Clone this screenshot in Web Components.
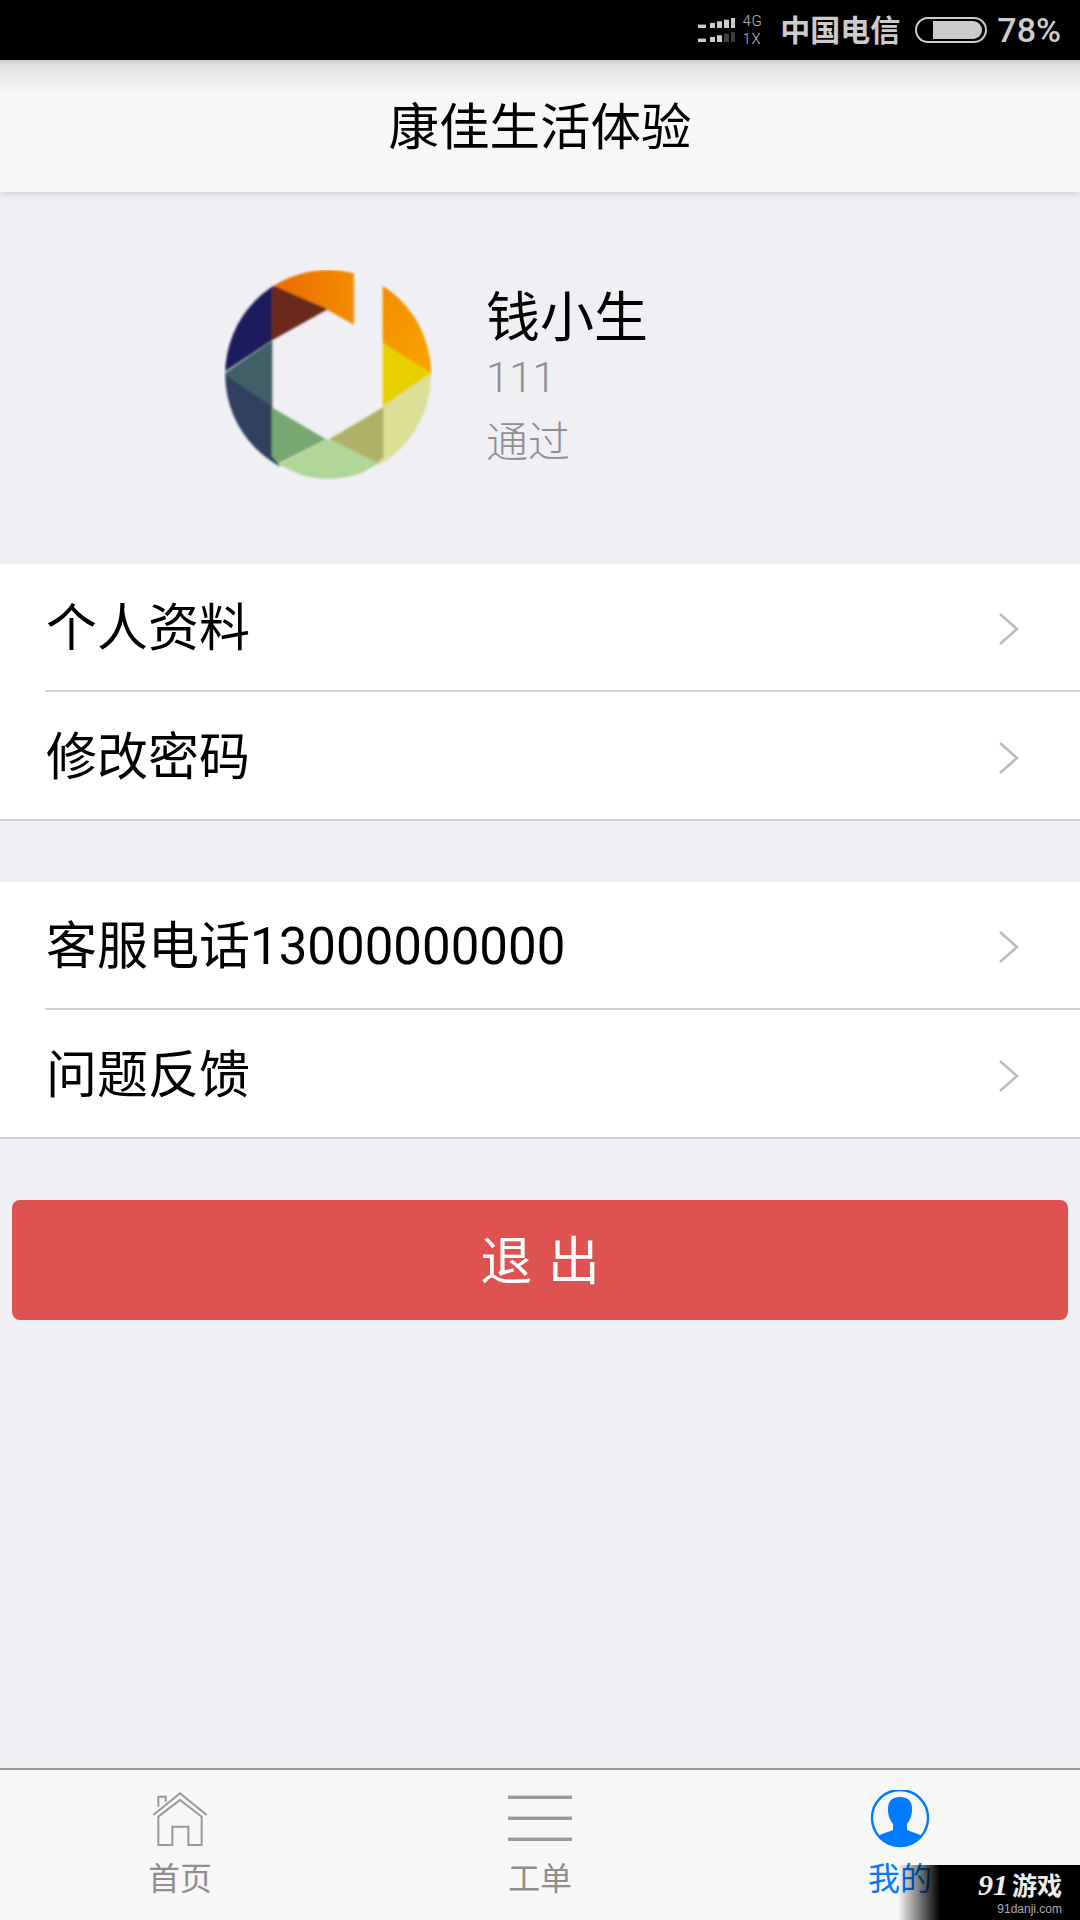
<!DOCTYPE html>
<html lang="zh">
<head>
<meta charset="utf-8">
<title>康佳生活体验</title>
<style>
  html, body { margin: 0; padding: 0; }
  body {
    width: 1080px;
    height: 1920px;
    overflow: hidden;
    position: relative;
    display: flex;
    flex-direction: column;
    background: #efeff4;
    font-family: Roboto, "Noto Sans CJK SC", sans-serif;
  }
  .fill { flex: 1; }
</style>
</head>
<body>
  <status-bar></status-bar>
  <app-header>康佳生活体验</app-header>
  <profile-card name="钱小生" code="111" state="通过"></profile-card>
  <menu-group>
    <menu-row>个人资料</menu-row>
    <menu-row>修改密码</menu-row>
  </menu-group>
  <menu-group style="margin-top:61px">
    <menu-row>客服电话13000000000</menu-row>
    <menu-row>问题反馈</menu-row>
  </menu-group>
  <logout-button>退 出</logout-button>
  <div class="fill"></div>
  <tab-bar>
    <tab-item label="首页" icon="home"></tab-item>
    <tab-item label="工单" icon="list"></tab-item>
    <tab-item label="我的" icon="me" active></tab-item>
  </tab-bar>
  <site-badge></site-badge>

<script>
  const FONT = 'Roboto, "Noto Sans CJK SC", sans-serif';

  class StatusBar extends HTMLElement {
    constructor() {
      super();
      // two rows of signal bars, the dim ones are the unused strength
      const xs = [0, 12, 19, 26, 33];
      const ws = [8, 5, 5, 5, 4];
      const bars = (y, on) => xs.map((x, i) => {
        const h = 3.4 + i * 1.65;
        return `<rect x="${x}" y="${y - h}" width="${ws[i]}" height="${h}" fill="${i >= on ? '#3c3c3c' : '#ccc'}"/>`;
      }).join('');
      this.attachShadow({mode: 'open'}).innerHTML = `
        <style>
          :host { display: flex; align-items: center; justify-content: flex-end; height: 60px; background: #000; color: #ccc; padding-right: 19px; box-sizing: border-box; font-family: ${FONT}; }
          .net { display: flex; flex-direction: column; font-size: 15px; line-height: 18px; letter-spacing: .6px; margin: 0 18px 0 8px; color: #bbb; font-weight: 300; }
          .carrier { font-size: 30px; font-weight: 700; margin-bottom: 5px; }
          .batt { margin: 0 10px 0 15px; display: block; }
          .pct { font-size: 34px; font-weight: 500; }
        </style>
        <svg width="37" height="26" viewBox="0 0 37 26">${bars(11, 5)}${bars(25, 3)}</svg>
        <div class="net"><span>4G</span><span>1X</span></div>
        <span class="carrier">中国电信</span>
        <svg class="batt" width="72" height="27" viewBox="0 0 72 27">
          <rect x="1" y="1" width="70" height="24" rx="12" fill="none" stroke="#ccc" stroke-width="2"/>
          <path d="M18 4H58a9 9 0 0 1 0 18H18z" fill="#ccc"/>
        </svg>
        <span class="pct">78%</span>`;
    }
  }
  customElements.define('status-bar', StatusBar);

  class AppHeader extends HTMLElement {
    constructor() {
      super();
      this.attachShadow({mode: 'open'}).innerHTML = `
        <style>
          :host {
            display: flex; align-items: center; justify-content: center;
            height: 132px; padding-bottom: 5px; box-sizing: border-box; position: relative; z-index: 1;
            background: linear-gradient(#cfcfcf 0, #e4e4e4 6px, #f7f7f8 34px);
            box-shadow: 0 2px 6px rgba(0,0,0,.14);
            font: 400 50.5px/1 "Noto Sans CJK SC", sans-serif; color: #000;
          }
        </style>
        <slot></slot>`;
    }
  }
  customElements.define('app-header', AppHeader);

  class ProfileCard extends HTMLElement {
    constructor() {
      super();
      this.attachShadow({mode: 'open'}).innerHTML = `
        <style>
          :host { display: flex; align-items: center; height: 372px; padding: 0 0 4px 224px; box-sizing: border-box; font-family: ${FONT}; }
          .info { margin: 10px 0 0 54px; display: flex; flex-direction: column; }
          .name { font-size: 54px; line-height: 72px; color: #000; }
          .code { font-size: 42px; line-height: 52px; margin-top: -3px; color: #8e8e93; font-weight: 300; }
          .state { font-size: 42px; line-height: 72px; margin-top: 3px; color: #8e8e93; font-weight: 300; }
          svg { display: block; }
          polygon { stroke-width: 2; }
        </style>
        <svg width="208" height="212" viewBox="71 62 624 636">
          <defs>
            <clipPath id="round"><ellipse cx="383.5" cy="375" rx="309" ry="313"/></clipPath>
            <linearGradient id="top" x1="0" x2="1"><stop offset="0" stop-color="#ea6a00"/><stop offset="1" stop-color="#f58c00"/></linearGradient>
            <linearGradient id="side" x1="0" y1="0" x2="1" y2="1"><stop offset="0" stop-color="#f58c00"/><stop offset="1" stop-color="#f8a800"/></linearGradient>
            <filter id="soft"><feGaussianBlur stdDeviation="2.4"/></filter>
          </defs>
          <g filter="url(#soft)">
            <g clip-path="url(#round)">
              <polygon fill="url(#top)" stroke="url(#top)" points="215,108 215,20 460,20 460,225 380,180"/>
              <polygon fill="#1f1f5b" stroke="#1f1f5b" points="215,108 215,272 72,367 30,372 40,100"/>
              <polygon fill="#31415f" stroke="#31415f" points="30,372 72,373 215,470 215,620 240,650 40,680"/>
              <polygon fill="#692a1e" stroke="#692a1e" points="215,108 380,180 215,272"/>
              <polygon fill="#3f6068" stroke="#3f6068" points="215,275 215,470 72,373"/>
              <polygon fill="#b0d698" stroke="#b0d698" points="236,645 380,570 535,640 400,720"/>
              <polygon fill="#76a870" stroke="#76a870" points="215,475 375,570 236,640 215,620"/>
              <polygon fill="#dce096" stroke="#dce096" points="548,470 692,375 720,600 533,645 548,622"/>
              <polygon fill="#b0b068" stroke="#b0b068" points="388,570 548,475 548,622 533,640"/>
              <polygon fill="url(#side)" stroke="url(#side)" points="548,100 720,100 720,392 548,282"/>
              <polygon fill="#e8d000" stroke="#e8d000" points="548,282 692,372 548,470"/>
            </g>
          </g>
        </svg>
        <div class="info">
          <span class="name">${this.getAttribute('name')}</span>
          <span class="code">${this.getAttribute('code')}</span>
          <span class="state">${this.getAttribute('state')}</span>
        </div>`;
    }
  }
  customElements.define('profile-card', ProfileCard);

  class MenuGroup extends HTMLElement {
    constructor() {
      super();
      this.attachShadow({mode: 'open'}).innerHTML = `
        <style>
          :host { display: block; background: #fff; border-bottom: 2px solid #d0d0d2; }
        </style>
        <slot></slot>`;
    }
  }
  customElements.define('menu-group', MenuGroup);

  class MenuRow extends HTMLElement {
    constructor() {
      super();
      this.attachShadow({mode: 'open'}).innerHTML = `
        <style>
          :host { display: block; padding-left: 45px; font-family: ${FONT}; }
          .in { display: flex; align-items: center; justify-content: space-between; height: 126px; padding-right: 60px; font-size: 51px; color: #000; border-bottom: 2px solid #d0d0d2; }
          :host(:last-child) .in { height: 127px; border-bottom: 0; }
          span { margin: 0 0 6px 1px; }
          svg { display: block; margin-top: 4px; }
        </style>
        <div class="in">
          <span><slot></slot></span>
          <svg width="22" height="34" viewBox="0 0 22 34"><path d="M2 2L19 17L2 32" fill="none" stroke="#bcbcbc" stroke-width="2.6"/></svg>
        </div>`;
    }
  }
  customElements.define('menu-row', MenuRow);

  class LogoutButton extends HTMLElement {
    constructor() {
      super();
      this.attachShadow({mode: 'open'}).innerHTML = `
        <style>
          :host {
            display: flex; align-items: center; justify-content: center;
            height: 120px; padding-bottom: 5px; box-sizing: border-box;
            margin: 61px 12px 0; border-radius: 8px;
            background: #de5350; color: #fff;
            font: 400 52px/1 "Noto Sans CJK SC", sans-serif; word-spacing: 4px;
          }
        </style>
        <slot></slot>`;
    }
  }
  customElements.define('logout-button', LogoutButton);

  class TabBar extends HTMLElement {
    constructor() {
      super();
      this.attachShadow({mode: 'open'}).innerHTML = `
        <style>
          :host { display: flex; height: 152px; box-sizing: border-box; background: #f7f7f8; border-top: 2px solid #999; }
        </style>
        <slot></slot>`;
    }
  }
  customElements.define('tab-bar', TabBar);

  const TAB_ICONS = {
    home: `<svg width="60" height="60" viewBox="150 90 180 180" fill="none" stroke="#999" stroke-width="6">
      <path d="M160 165L240 100L320 165"/>
      <path d="M175 170L240 120L305 170V255H265V200H217V255H175Z"/>
      <path d="M175 140V110H197V125"/>
    </svg>`,
    list: `<svg width="64" height="60" viewBox="0 0 64 60" fill="#999">
      <rect x="0" y="5.6" width="64" height="3.4"/>
      <rect x="0" y="26.6" width="64" height="3.4"/>
      <rect x="0" y="47.6" width="64" height="3.4"/>
    </svg>`,
    me: `<svg width="60" height="60" viewBox="0 0 60 60">
      <defs><clipPath id="disc"><circle cx="30" cy="28" r="28"/></clipPath></defs>
      <circle cx="30" cy="28" r="28" fill="none" stroke="#007aff" stroke-width="2.4"/>
      <path clip-path="url(#disc)" fill="#007aff" d="M30 7C22 7 18 11 18 19C18 26 20 30 23 34V40L7 46L4 60H56L53 46L37 40V34C40 30 42 26 42 19C42 11 38 7 30 7Z"/>
    </svg>`
  };

  class TabItem extends HTMLElement {
    constructor() {
      super();
      this.attachShadow({mode: 'open'}).innerHTML = `
        <style>
          :host { flex: 1; display: flex; flex-direction: column; align-items: center; padding-top: 20px; font-family: "Noto Sans CJK SC", sans-serif; font-size: 32px; line-height: 44px; color: #8e8e8e; }
          :host([active]) { color: #007aff; }
          svg { display: block; }
          span { margin-top: 4px; }
        </style>
        ${TAB_ICONS[this.getAttribute('icon')]}
        <span>${this.getAttribute('label')}</span>`;
    }
  }
  customElements.define('tab-item', TabItem);

  class SiteBadge extends HTMLElement {
    constructor() {
      super();
      this.attachShadow({mode: 'open'}).innerHTML = `
        <style>
          :host {
            position: absolute; right: 0; bottom: 0; width: 182px; height: 55px; box-sizing: border-box;
            background: linear-gradient(90deg, rgba(0,0,0,0), #000 42px);
            color: #eee; padding: 1px 18px 0 0; display: flex; flex-direction: column; align-items: flex-end;
          }
          .big { font: 700 25px/36px "Noto Sans CJK SC", sans-serif; }
          .big i { font: italic 700 30px/30px "Liberation Serif", serif; margin-right: 4px; }
          .small { font: 400 12px/14px "Liberation Sans", sans-serif; color: #aaa; }
        </style>
        <span class="big"><i>91</i>游戏</span>
        <span class="small">91danji.com</span>`;
    }
  }
  customElements.define('site-badge', SiteBadge);
</script>
</body>
</html>
